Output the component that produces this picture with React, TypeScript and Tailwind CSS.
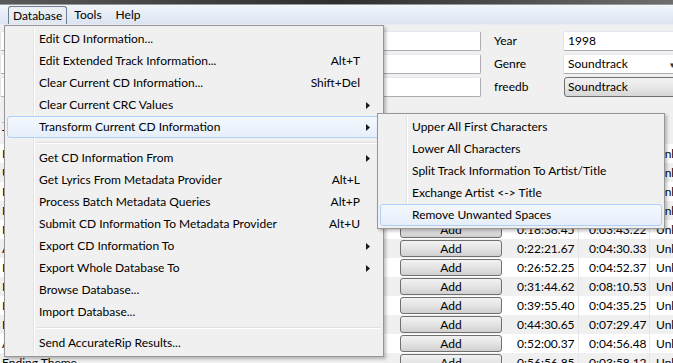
import React from 'react';

type MenuItem =
  | { kind: 'item'; label: string; shortcut?: string; submenu?: boolean; active?: boolean }
  | { kind: 'sep' };

const mainItems: MenuItem[] = [
  { kind: 'item', label: 'Edit CD Information...' },
  { kind: 'item', label: 'Edit Extended Track Information...', shortcut: 'Alt+T' },
  { kind: 'item', label: 'Clear Current CD Information...', shortcut: 'Shift+Del' },
  { kind: 'item', label: 'Clear Current CRC Values', submenu: true },
  { kind: 'item', label: 'Transform Current CD Information', submenu: true, active: true },
  { kind: 'sep' },
  { kind: 'item', label: 'Get CD Information From', submenu: true },
  { kind: 'item', label: 'Get Lyrics From Metadata Provider', shortcut: 'Alt+L' },
  { kind: 'item', label: 'Process Batch Metadata Queries', shortcut: 'Alt+P' },
  { kind: 'item', label: 'Submit CD Information To Metadata Provider', shortcut: 'Alt+U' },
  { kind: 'item', label: 'Export CD Information To', submenu: true },
  { kind: 'item', label: 'Export Whole Database To', submenu: true },
  { kind: 'item', label: 'Browse Database...' },
  { kind: 'item', label: 'Import Database...' },
  { kind: 'sep' },
  { kind: 'item', label: 'Send AccurateRip Results...' },
];

const subItems: MenuItem[] = [
  { kind: 'item', label: 'Upper All First Characters' },
  { kind: 'item', label: 'Lower All Characters' },
  { kind: 'item', label: 'Split Track Information To Artist/Title' },
  { kind: 'item', label: 'Exchange Artist <-> Title' },
  { kind: 'item', label: 'Remove Unwanted Spaces', active: true },
];

const tracks = [
  { title: 'Intro', start: '0:00:00.00', length: '0:04:12.30' },
  { title: 'Unbreakable', start: '0:04:12.30', length: '0:05:01.18' },
  { title: 'Find Your Way', start: '0:09:13.48', length: '0:04:47.60' },
  { title: 'Forever More', start: '0:14:01.08', length: '0:04:37.37' },
  { title: 'Memories', start: '0:18:38.45', length: '0:03:43.22' },
  { title: 'Across The Sea', start: '0:22:21.67', length: '0:04:30.33' },
  { title: 'In The Night', start: '0:26:52.25', length: '0:04:52.37' },
  { title: 'Into The Light', start: '0:31:44.62', length: '0:08:10.53' },
  { title: 'Island', start: '0:39:55.40', length: '0:04:35.25' },
  { title: 'Farewell', start: '0:44:30.65', length: '0:07:29.47' },
  { title: 'Always', start: '0:52:00.37', length: '0:04:56.48' },
  { title: 'Ending Theme', start: '0:56:56.85', length: '0:03:58.12' },
];

const Arrow = () => (
  <svg width="4" height="7" viewBox="0 0 4 7" className="block">
    <path d="M0 0 L4 3.5 L0 7 Z" fill="#1a1a1a" />
  </svg>
);

const MenuList: React.FC<{ items: MenuItem[]; width: string }> = ({ items, width }) => (
  <div className={`relative ${width} bg-[#f0f0f0] border border-[#979797] p-[2px] shadow-[2px_2px_3px_rgba(0,0,0,0.25)]`}>
    <div className="absolute top-[2px] bottom-[2px] left-[28px] w-[2px] border-l border-[#e2e3e3] bg-white" />
    {items.map((it, i) =>
      it.kind === 'sep' ? (
        <div key={i} className="h-[9px] flex items-center pl-[30px]">
          <div className="w-full h-[2px] border-t border-[#e0e0e0] bg-white" />
        </div>
      ) : (
        <div
          key={i}
          className={`relative h-[22px] flex items-center pl-[31px] pr-[8px] rounded-[3px] border ${
            it.active
              ? 'border-[#aecff7] bg-gradient-to-b from-[#f4f8fd] to-[#e5eefa]'
              : 'border-transparent'
          }`}
        >
          <span className="flex-1 whitespace-nowrap">{it.label}</span>
          {it.shortcut && <span className="mr-[12px] whitespace-nowrap">{it.shortcut}</span>}
          {it.submenu && (
            <span className="mr-[2px]">
              <Arrow />
            </span>
          )}
        </div>
      )
    )}
  </div>
);

const TextField: React.FC<{ value?: string; className?: string; children?: React.ReactNode }> = ({ value, className, children }) => (
  <div className={`h-[20px] bg-white border border-[#abadb3] border-t-[#e3e9ef] border-l-[#e2e3ea] rounded-[2px] px-[4px] flex items-center whitespace-nowrap overflow-hidden ${className ?? ''}`}>
    {value}
    {children}
  </div>
);

const AddButton = () => (
  <div className="mx-[3px] h-[17px] rounded-[3px] border border-[#707070] bg-gradient-to-b from-[#f2f2f2] via-[#e4e4e4] to-[#d0d0d0] flex items-center justify-center">
    Add
  </div>
);

export default function App() {
  return (
    <div className="relative w-[673px] h-[363px] overflow-hidden bg-[#f0f0f0] text-[12px] text-black font-['Lato',sans-serif] leading-none">
      {/* window title edge */}
      <div className="h-[5px] bg-gradient-to-r from-[#5a5a5a] via-[#2e2e2e] to-[#6e6e6e] border-b border-[#9a9a9a]" />

      {/* menu bar */}
      <div className="h-[20px] flex items-end pl-[8px] bg-gradient-to-b from-[#f1f5fb] to-[#dbe4f1] border-b border-[#e8edf5]">
        <div className="h-[18px] px-[4px] flex items-center border border-b-0 border-[#6f7e91] rounded-t-[3px] bg-gradient-to-b from-[#eef2f7] to-[#e1e7ef]">
          Database
        </div>
        <div className="h-[18px] ml-[3px] px-[4px] flex items-center">Tools</div>
        <div className="h-[18px] ml-[6px] px-[4px] flex items-center">Help</div>
      </div>

      {/* form fields */}
      <div className="flex pt-[6px] h-[92px]">
        <div className="w-[481px] shrink-0 flex flex-col gap-[3px]">
          <TextField value="Soundtrack Edition" className="px-[1px]" />
          <TextField value="Various Artists" />
          <TextField value="" />
        </div>
        <div className="ml-[13px] w-[69px] shrink-0 flex flex-col gap-[3px]">
          <div className="h-[20px] flex items-center">Year</div>
          <div className="h-[20px] flex items-center">Genre</div>
          <div className="h-[20px] flex items-center">freedb</div>
        </div>
        <div className="w-[118px] shrink-0 flex flex-col gap-[3px]">
          <TextField value="1998" />
          <TextField className="px-[2px] justify-between">
            <span>Soundtrack</span>
            <span className="text-[9px] text-[#333] mr-[1px]">▾</span>
          </TextField>
          <div className="h-[20px] ml-[1px] rounded-[3px] border border-[#707070] bg-gradient-to-b from-[#f2f2f2] via-[#e8e8e8] to-[#d6d6d6] px-[3px] flex items-center">
            Soundtrack
          </div>
        </div>
      </div>

      {/* tab / header strip */}
      <div className="h-[27px] flex items-end px-[2px]">
        <div className="h-[22px] border-t border-[#b5b5b5] flex items-center pr-[4px]">Tracks</div>
      </div>

      {/* track table */}
      <div className="flex flex-col">
        {tracks.map((t, i) => (
          <div key={i} className={`h-[19px] flex items-center ${i % 2 === 0 ? 'bg-white' : 'bg-[#f0f0f0]'}`}>
            <div className="w-[397px] shrink-0 pl-[2px] whitespace-nowrap overflow-hidden">{t.title}</div>
            <div className="w-[108px] shrink-0">
              <AddButton />
            </div>
            <div className="w-[74px] shrink-0 h-full flex items-center pl-[12px] border-r border-[#e6e6e6]">{t.start}</div>
            <div className="w-[71px] shrink-0 h-full flex items-center pl-[10px] border-r border-[#e6e6e6]">{t.length}</div>
            <div className="flex-1 pl-[6px] whitespace-nowrap overflow-hidden">Unknown Artist</div>
          </div>
        ))}
      </div>

      {/* Database menu */}
      <div className="absolute left-[4px] top-[25px]">
        <MenuList items={mainItems} width="w-[380px]" />
      </div>

      {/* Transform submenu */}
      <div className="absolute left-[377px] top-[113px]">
        <MenuList items={subItems} width="w-[288px]" />
      </div>
    </div>
  );
}
